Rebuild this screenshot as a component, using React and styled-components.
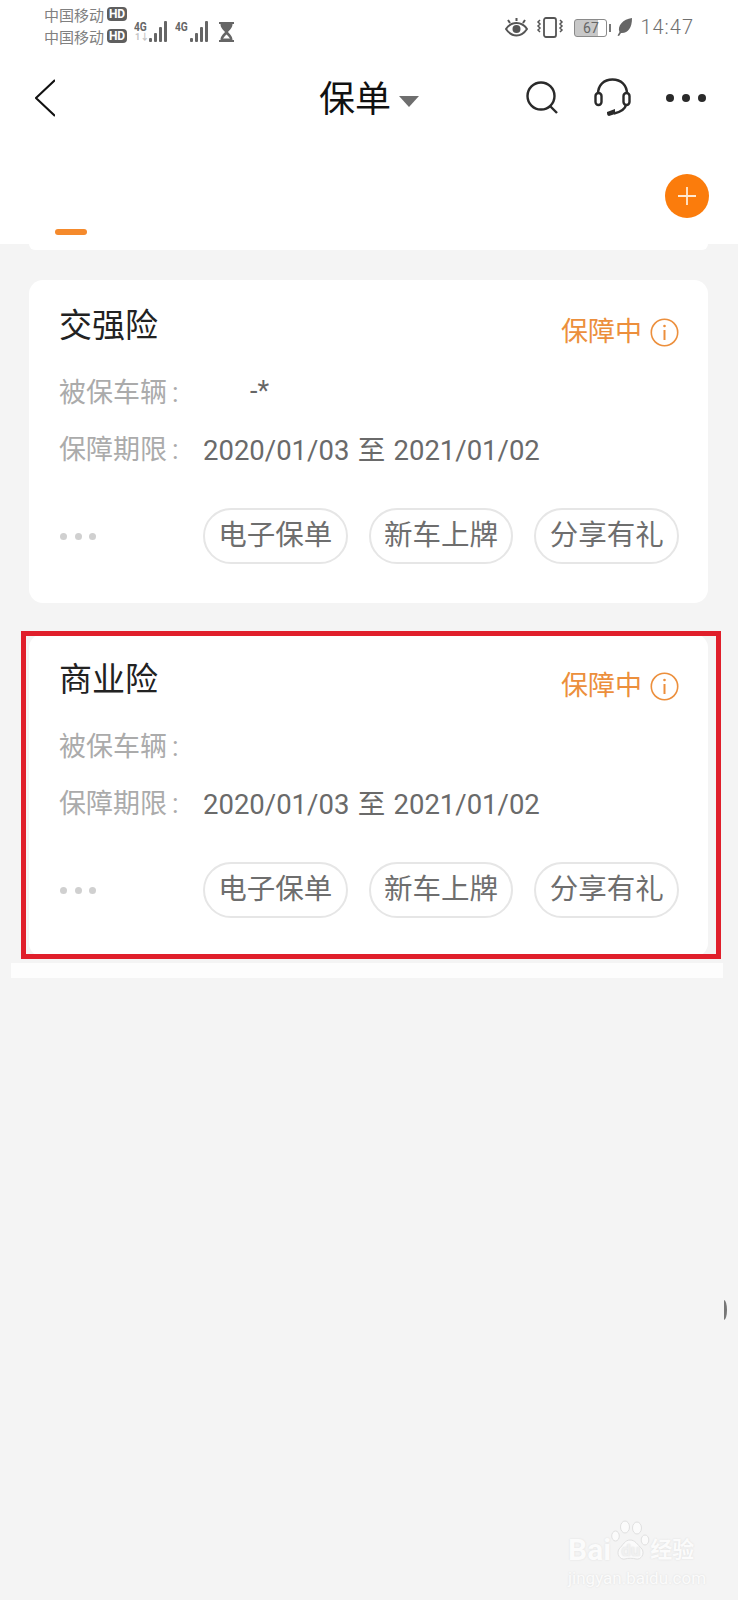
import React from "react";
import styled, { createGlobalStyle } from "styled-components";

const GlobalStyle = createGlobalStyle`
  html, body { margin: 0; padding: 0; background: #f4f4f4; }
  body { font-family: Roboto, "Noto Sans CJK SC", sans-serif; }
`;

const Page = styled.div`
  position: relative;
  width: 738px;
  height: 1600px;
  overflow: hidden;
  background: #f4f4f4;
`;

const Top = styled.header`
  background: #fff;
`;

const StatusBar = styled.div`
  height: 50px;
  box-sizing: border-box;
  padding: 3px 44px 0 44px;
  display: flex;
  align-items: flex-start;
  justify-content: space-between;
  color: #6a6a6a;
`;

const StatusSide = styled.div`
  display: flex;
  align-items: center;
`;

const Carriers = styled.div`
  display: flex;
  flex-direction: column;
`;

const Carrier = styled.div`
  height: 22px;
  display: flex;
  align-items: center;
  font-size: 15px;
  color: #808080;
  white-space: nowrap;
`;

const HdBadge = styled.span`
  margin-left: 3px;
  width: 20px;
  height: 14px;
  border-radius: 4px;
  background: #5f5f5f;
  color: #fff;
  font-size: 12px;
  line-height: 14px;
  font-weight: 700;
  text-align: center;
`;

const Signal = styled.div`
  position: relative;
  height: 21px;
  display: flex;
  align-items: flex-end;
  gap: 2px;
  margin-left: ${(p) => p.$gap}px;
  margin-top: 12px;
`;

const SignalType = styled.span`
  width: 13px;
  align-self: flex-start;
  font-size: 12px;
  line-height: 12px;
  font-weight: 700;
  color: #666;
  transform: scaleX(0.85);
  transform-origin: left top;
`;

const SignalSub = styled.span`
  position: absolute;
  left: 1px;
  bottom: 0;
  font-size: 9px;
  line-height: 9px;
  font-weight: 700;
  color: #c4c4c4;
`;

const SignalBar = styled.span`
  width: 3px;
  height: ${(p) => p.$h}px;
  background: #666;
  border-radius: 1px;
`;

const Hourglass = styled.svg`
  width: 15px;
  height: 20px;
  margin: 13px 0 0 11px;
`;

const StatusIcon = styled.svg`
  display: block;
  margin-top: 12px;
  margin-right: ${(p) => p.$mr}px;
`;

const Battery = styled.div`
  margin-top: 13px;
  width: 33px;
  height: 18px;
  box-sizing: border-box;
  border: 1px solid #8a8a8a;
  border-radius: 3px;
  background: linear-gradient(90deg, #c8c8c8 75%, #fff 75%);
  color: #666;
  font-size: 14px;
  line-height: 16px;
  text-align: center;
`;

const BatteryTip = styled.span`
  width: 2px;
  height: 8px;
  background: #777;
  margin: 13px 6px 0 2px;
`;

const Time = styled.span`
  margin: 12px 0 0 8px;
  font-size: 20px;
  line-height: 24px;
  letter-spacing: 1px;
  font-weight: 300;
  color: #6f6f6f;
`;

const Nav = styled.nav`
  height: 95px;
  box-sizing: border-box;
  padding: 0 32px 0 35px;
  display: flex;
  align-items: center;
  justify-content: space-between;
`;

const TitleGroup = styled.div`
  position: absolute;
  left: 319px;
  top: 76px;
  display: flex;
  align-items: center;
`;

const Title = styled.span`
  font-size: 36px;
  line-height: 48px;
  color: #111;
`;

const Caret = styled.span`
  margin: 2px 0 0 8px;
  width: 0;
  height: 0;
  border-left: 10px solid transparent;
  border-right: 10px solid transparent;
  border-top: 11px solid #6e6e6e;
`;

const NavActions = styled.div`
  display: flex;
  align-items: center;
  gap: 35px;
`;

const Dots = styled.div`
  display: flex;
  gap: ${(p) => p.$gap}px;
  span {
    width: ${(p) => p.$size}px;
    height: ${(p) => p.$size}px;
    border-radius: 50%;
    background: ${(p) => p.$color};
  }
`;

const TabBar = styled.div`
  height: 99px;
  box-sizing: border-box;
  padding: 29px 29px 9px 55px;
  display: flex;
  justify-content: space-between;
`;

const TabIndicator = styled.div`
  align-self: flex-end;
  width: 32px;
  height: 6px;
  border-radius: 3px;
  background: #f58a2c;
`;

const AddButton = styled.div`
  width: 44px;
  height: 44px;
  border-radius: 50%;
  background: #fb7c0c;
  display: flex;
  align-items: center;
  justify-content: center;
`;

const Content = styled.main`
  padding: 0 30px 0 29px;
`;

const CardTail = styled.div`
  height: 6px;
  background: #fff;
  border-radius: 0 0 12px 12px;
  margin-bottom: 30px;
`;

const Card = styled.section`
  height: 323px;
  box-sizing: border-box;
  padding: 24px 29px 0 30px;
  background: #fff;
  border-radius: 14px;
`;

const CardHead = styled.div`
  display: flex;
  justify-content: space-between;
  align-items: flex-start;
  margin-bottom: 8px;
`;

const CardTitle = styled.h2`
  margin: 0;
  font-size: 33px;
  line-height: 44px;
  font-weight: 400;
  color: #222;
`;

const CardStatus = styled.div`
  display: flex;
  align-items: center;
  gap: 8px;
  padding-top: 6px;
  font-size: 27px;
  line-height: 44px;
  color: #ec8f3c;
`;

const Row = styled.div`
  height: 57px;
  display: flex;
  align-items: center;
  font-size: 27px;
`;

const RowLabel = styled.span`
  width: 144px;
  flex: none;
  color: #ababab;
  white-space: nowrap;
`;

const LabelColon = styled.span`
  margin-left: 5px;
`;

const RowValue = styled.span`
  color: #6a6a6a;
  font-size: 27.5px;
  word-spacing: 1.500px;
  white-space: nowrap;
`;

const MaskedPlate = styled.span`
  margin-left: 47px;
  color: #666;
`;

const CardFoot = styled.div`
  margin-top: 32px;
  padding-left: 1px;
  display: flex;
  align-items: center;
  justify-content: space-between;
`;

const Chips = styled.div`
  display: flex;
  gap: 21px;
`;

const Chip = styled.button`
  width: 144.700px;
  height: 56px;
  box-sizing: border-box;
  padding: 0;
  border: 2px solid #e6e6e6;
  border-radius: 28px;
  background: #fff;
  color: #6e6e6e;
  font-family: inherit;
  font-size: 28.500px;
  line-height: 50px;
`;

const Annotated = styled.div`
  position: relative;
  margin-top: 31px;
`;

const RedBox = styled.div`
  position: absolute;
  top: -3px;
  bottom: -2px;
  left: -8px;
  right: -13px;
  border: 5px solid #e01f2b;
  pointer-events: none;
`;

const Strip = styled.div`
  height: 15px;
  margin: 6px -15px 0 -18px;
  background: #fdfdfd;
`;

const EdgeMark = styled.div`
  position: absolute;
  left: 724px;
  top: 1300px;
  width: 3px;
  height: 20px;
  border-radius: 0 3px 3px 0 / 0 10px 10px 0;
  background: #777;
`;

const Watermark = styled.div`
  position: absolute;
  left: 568px;
  top: 1520px;
  width: 134px;
  color: #fbfbfb;
  text-shadow: 0 0 2px #dcdcdc;
  white-space: nowrap;
`;

const WatermarkLogo = styled.div`
  position: relative;
  height: 28px;
  padding-top: 16px;
  display: flex;
  align-items: center;
  font-size: 30px;
  font-weight: 700;
  line-height: 28px;
`;

const WatermarkPaw = styled.svg`
  position: absolute;
  left: 43px;
  top: 0;
`;

const WatermarkDu = styled.span`
  position: relative;
  margin-left: 10px;
  font-size: 17px;
  color: #f0f0f0;
`;

const WatermarkCn = styled.span`
  margin-left: 10px;
  font-size: 22px;
`;

const WatermarkUrl = styled.div`
  font-size: 17px;
  line-height: 18px;
  margin-top: 5px;
`;

function SignalIcon({ gap, heights, sub }) {
  return (
    <Signal $gap={gap}>
      <SignalType>4G</SignalType>
      {sub && <SignalSub>{sub}</SignalSub>}
      {heights.map((h, i) => (
        <SignalBar key={i} $h={h} />
      ))}
    </Signal>
  );
}

function InfoIcon() {
  return (
    <svg width="29" height="29" viewBox="0 0 29 29" fill="none" stroke="#ec8f3c">
      <circle cx="14.5" cy="14.5" r="13.2" strokeWidth="1.6" />
      <path d="M14.5 12v10" strokeWidth="2" />
      <circle cx="14.5" cy="8" r="1.3" fill="#ec8f3c" stroke="none" />
    </svg>
  );
}

function PolicyCard({ title, plate }) {
  return (
    <Card>
      <CardHead>
        <CardTitle>{title}</CardTitle>
        <CardStatus>
          保障中
          <InfoIcon />
        </CardStatus>
      </CardHead>
      <Row>
        <RowLabel>
          被保车辆<LabelColon>:</LabelColon>
        </RowLabel>
        {plate && <MaskedPlate>{plate}</MaskedPlate>}
      </Row>
      <Row>
        <RowLabel>
          保障期限<LabelColon>:</LabelColon>
        </RowLabel>
        <RowValue>2020/01/03 至 2021/01/02</RowValue>
      </Row>
      <CardFoot>
        <Dots $size={7} $gap={7.5} $color="#d0d0d0">
          <span />
          <span />
          <span />
        </Dots>
        <Chips>
          <Chip>电子保单</Chip>
          <Chip>新车上牌</Chip>
          <Chip>分享有礼</Chip>
        </Chips>
      </CardFoot>
    </Card>
  );
}

export default function App() {
  return (
    <Page>
      <GlobalStyle />
      <Top>
        <StatusBar>
          <StatusSide>
            <Carriers>
              <Carrier>
                中国移动<HdBadge>HD</HdBadge>
              </Carrier>
              <Carrier>
                中国移动<HdBadge>HD</HdBadge>
              </Carrier>
            </Carriers>
            <SignalIcon gap={7} heights={[4, 9, 15, 21]} sub="1↓" />
            <SignalIcon gap={8} heights={[4, 9, 15, 21]} />
            <Hourglass viewBox="0 0 15 20">
              <path d="M0 0h15v2h-1.500c0 4-3 6-4.500 8 1.500 2 4.500 4 4.500 8H15v2H0v-2h1.500c0-4 3-6 4.500-8C4.500 8 1.500 6 1.500 2H0z" fill="#666" />
              <path d="M4 16.500c1-1.500 2.500-3 3.500-4 1 1 2.500 2.500 3.500 4z" fill="#fff" />
            </Hourglass>
          </StatusSide>
          <StatusSide>
            <StatusIcon $mr={8} width="23" height="20" viewBox="0 0 23 20" fill="none" stroke="#555">
              <path d="M1 12c3-4.500 6.500-6 10.500-6S19 7.500 22 12c-3 4.500-6.500 6.500-10.500 6.500S4 16.500 1 12z" strokeWidth="2" />
              <circle cx="11.500" cy="12" r="4" fill="#555" stroke="none" />
              <path d="M5 6L3 3M11.500 4V1M18 6l2-3" strokeWidth="2" />
            </StatusIcon>
            <StatusIcon $mr={10} width="28" height="21" viewBox="0 0 28 21" fill="none" stroke="#555">
              <rect x="8" y="1" width="12" height="19" rx="2" strokeWidth="1.800" />
              <path d="M4 3l-2 2 2 2-2 2 2 2-2 2 2 2M24 3l2 2-2 2 2 2-2 2 2 2-2 2" strokeWidth="1.500" />
            </StatusIcon>
            <Battery>67</Battery>
            <BatteryTip />
            <StatusIcon $mr={0} width="15" height="18" viewBox="0 0 15 18">
              <path d="M15 0C15 10 11 15.500 4 15L2 18 0.500 17.500 2.500 14C0 8 6 1 15 0z" fill="#666" />
            </StatusIcon>
            <Time>14:47</Time>
          </StatusSide>
        </StatusBar>
        <Nav>
          <svg width="20" height="38" viewBox="0 0 20 38" fill="none" stroke="#111" strokeWidth="2">
            <path d="M20 1L1 19l19 18" />
          </svg>
          <TitleGroup>
            <Title>保单</Title>
            <Caret />
          </TitleGroup>
          <NavActions>
            <svg width="33" height="33" viewBox="0 0 33 33" fill="none" stroke="#2a2a2a" strokeWidth="2.400">
              <circle cx="15" cy="15" r="13.500" />
              <path d="M24 25l7 7" />
            </svg>
            <svg width="37" height="39" viewBox="0 0 37 39" fill="none" stroke="#2a2a2a" strokeWidth="2.400">
              <path d="M4 16C4 7 10 1.500 18.500 1.500S33 7 33 16" />
              <rect x="1.500" y="15" width="6" height="12" rx="3" />
              <rect x="29.500" y="15" width="6" height="12" rx="3" />
              <path d="M32 27c-1 5-6 7-12 8.500" />
              <path d="M13 34l8-3v5l-6 2c-2 0-2-3-2-4z" fill="#2a2a2a" stroke="none" />
            </svg>
            <Dots $size={8} $gap={8} $color="#2a2a2a">
              <span />
              <span />
              <span />
            </Dots>
          </NavActions>
        </Nav>
        <TabBar>
          <TabIndicator />
          <AddButton>
            <svg width="18" height="18" viewBox="0 0 18 18" stroke="#ffe9d2" strokeWidth="1.800">
              <path d="M9 0v18M0 9h18" />
            </svg>
          </AddButton>
        </TabBar>
      </Top>
      <Content>
        <CardTail />
        <PolicyCard title="交强险" plate="-*" />
        <Annotated>
          <PolicyCard title="商业险" />
          <RedBox />
        </Annotated>
        <Strip />
      </Content>
      <EdgeMark />
      <Watermark>
        <WatermarkLogo>
          <WatermarkPaw width="42" height="44" viewBox="0 0 42 44" fill="#fbfbfb" stroke="#e0e0e0">
            <ellipse cx="4.500" cy="16" rx="3.800" ry="5" />
            <ellipse cx="14" cy="7" rx="4.500" ry="6" />
            <ellipse cx="26" cy="8" rx="4.500" ry="6" />
            <ellipse cx="34" cy="20" rx="3.800" ry="5" />
            <path d="M19 20c5 0 7 4 12 9 3 5-1 11-6 10-3-1-8-1-11 0-5 1-9-5-6-10 4-4 6-9 11-9z" />
          </WatermarkPaw>
          Bai
          <WatermarkDu>du</WatermarkDu>
          <WatermarkCn>经验</WatermarkCn>
        </WatermarkLogo>
        <WatermarkUrl>jingyan.baidu.com</WatermarkUrl>
      </Watermark>
    </Page>
  );
}
